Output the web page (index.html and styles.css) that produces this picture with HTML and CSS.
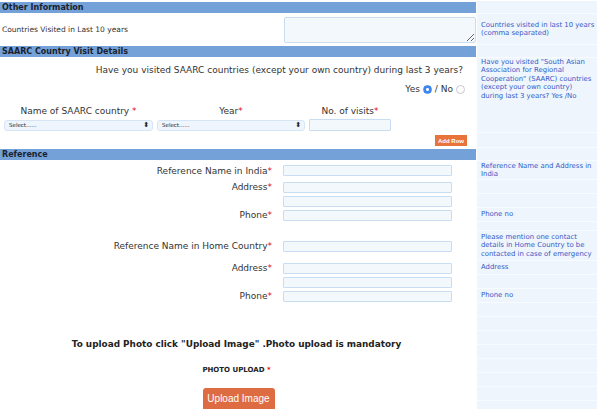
FILE: index.html
```html
<!DOCTYPE html>
<html lang="en">
<head>
<meta charset="UTF-8">
<meta name="viewport" content="width=device-width, initial-scale=1.0">
<title>Other Information</title>
<link rel="stylesheet" href="styles.css">
</head>
<body>

<div class="form">
  <div class="row row-head first">
    <div class="main"><div class="section">Other Information</div></div>
    <div class="help"></div>
  </div>

  <div class="row row-countries">
    <div class="main">
      <span class="small-label">Countries Visited in Last 10 years</span>
      <textarea class="countries"></textarea>
    </div>
    <div class="help">Countries visited in last 10 years (comma separated)</div>
  </div>

  <div class="row row-head">
    <div class="main"><div class="section">SAARC Country Visit Details</div></div>
    <div class="help"></div>
  </div>

  <div class="row row-question">
    <div class="main question">
      <div class="question-text">Have you visited SAARC countries (except your own country) during last 3 years?</div>
      <div class="yesno">
        Yes <span class="radio checked"></span>/ No <span class="radio"></span>
      </div>
    </div>
    <div class="help"><span>Have you visited "South Asian Association for Regional Cooperation" (SAARC) countries (except your own country)<br>during last 3 years? Yes /No</span></div>
  </div>

  <div class="row row-visits">
    <div class="main visits">
      <div class="col-head">Name of SAARC country <span class="req">*</span></div>
      <div class="col-head">Year<span class="req">*</span></div>
      <div class="col-head">No. of visits<span class="req">*</span></div>
      <div class="select"><span>Select......</span><span class="arrows">&#x2B0D;</span></div>
      <div class="select"><span>Select......</span><span class="arrows">&#x2B0D;</span></div>
      <input type="text" class="field">
    </div>
    <div class="help"></div>
  </div>

  <div class="row row-add">
    <div class="main add"><button class="add-row">Add Row</button></div>
    <div class="help"></div>
  </div>

  <div class="row row-head">
    <div class="main"><div class="section">Reference</div></div>
    <div class="help"></div>
  </div>

  <div class="row row-tall">
    <div class="main ref">
      <label>Reference Name in India<span class="req">*</span></label>
      <input type="text" class="field wide">
    </div>
    <div class="help">Reference Name and Address in India</div>
  </div>
  <div class="row row-line">
    <div class="main ref">
      <label>Address<span class="req">*</span></label>
      <input type="text" class="field wide">
    </div>
    <div class="help"></div>
  </div>
  <div class="row row-line">
    <div class="main ref">
      <label></label>
      <input type="text" class="field wide">
    </div>
    <div class="help"></div>
  </div>
  <div class="row row-line">
    <div class="main ref">
      <label>Phone<span class="req">*</span></label>
      <input type="text" class="field wide">
    </div>
    <div class="help">Phone no</div>
  </div>

  <div class="row row-gap">
    <div class="main"></div>
    <div class="help"></div>
  </div>

  <div class="row row-home">
    <div class="main ref">
      <label>Reference Name in Home Country<span class="req">*</span></label>
      <input type="text" class="field wide">
    </div>
    <div class="help">Please mention one contact details in Home Country to be contacted in case of emergency</div>
  </div>
  <div class="row row-line">
    <div class="main ref">
      <label>Address<span class="req">*</span></label>
      <input type="text" class="field wide">
    </div>
    <div class="help">Address</div>
  </div>
  <div class="row row-line">
    <div class="main ref">
      <label></label>
      <input type="text" class="field wide">
    </div>
    <div class="help"></div>
  </div>
  <div class="row row-line">
    <div class="main ref">
      <label>Phone<span class="req">*</span></label>
      <input type="text" class="field wide">
    </div>
    <div class="help">Phone no</div>
  </div>

  <div class="row row-upload">
    <div class="main upload">
      <p class="upload-note">To upload Photo click "Upload Image" .Photo upload is mandatory</p>
      <p class="upload-title">PHOTO UPLOAD <span class="req">*</span></p>
      <button class="upload-btn">Upload Image</button>
    </div>
    <div class="help stripes"></div>
  </div>
</div>

</body>
</html>
```

FILE: styles.css
```css
body {
  margin: 0;
  font-family: "DejaVu Sans", Verdana, sans-serif;
  color: #333;
  background: #fff;
  overflow: hidden;
}
.form {
  width: 597px;
  padding-top: 1px;
}
.row {
  display: grid;
  grid-template-columns: 477px 120px;
}
.main {
  display: flex;
  align-items: center;
}
.help {
  background: #eef5fc;
  border-bottom: 1px solid #f8fbff;
  color: #3559c8;
  font-size: 6.9px;
  line-height: 8.4px;
  padding: 0 0 0 4px;
  display: flex;
  align-items: center;
}
.section {
  width: 476px;
  height: 11px;
  background: #73a1d8;
  color: #1b1f2e;
  font-weight: bold;
  font-size: 8px;
  line-height: 11px;
  padding-left: 2px;
  box-sizing: border-box;
}
.row-head { height: 13px; }
.row-countries { height: 31px; }
.row-question { height: 42px; }
.row-visits { height: 33px; }
.row-add { height: 15px; }
.row-tall { height: 19px; }
.row-line { height: 14px; }
.row-gap { height: 9px; }
.row-home { height: 30px; }
.row-upload { height: 106px; }

.req { color: #e01010; }

.small-label {
  font-size: 7.5px;
  padding-left: 2px;
}
textarea.countries {
  margin-left: auto;
  margin-right: 1px;
  width: 192px;
  height: 26px;
  box-sizing: border-box;
  border: 1px solid #c8ddf2;
  background: #f3f8fd;
  border-radius: 2px;
}

.question {
  flex-direction: column;
  align-items: flex-end;
  justify-content: flex-start;
  font-size: 9px;
  padding-right: 14px;
}
.question-text { margin-top: 7px; }
.yesno {
  margin-top: 9px;
  margin-right: -3px;
  display: flex;
  align-items: center;
  gap: 2px;
}
.radio {
  display: inline-block;
  width: 7px;
  height: 7px;
  border: 1px solid #c8c8c8;
  border-radius: 50%;
  background: #fff;
  margin: 0 1px;
}
.radio.checked {
  border-color: #3c86f0;
  background: radial-gradient(circle, #fff 0 1.3px, #3c86f0 1.6px);
}

.visits {
  display: grid;
  grid-template-columns: 149px 148px 82px;
  column-gap: 4px;
  row-gap: 3px;
  align-content: start;
  padding: 6px 0 0 4px;
  font-size: 9px;
}
.col-head { text-align: center; }
.select {
  height: 11px;
  box-sizing: border-box;
  border: 1px solid #d6e5f5;
  background: #eef5fc;
  border-radius: 3px;
  font-size: 5.5px;
  display: flex;
  align-items: center;
  justify-content: space-between;
  padding: 0 3px 0 4px;
  color: #222;
}
.arrows { font-size: 7px; }
.field {
  height: 12px;
  box-sizing: border-box;
  border: 1px solid #c8ddf2;
  background: #f3f8fd;
  border-radius: 1px;
  padding: 0;
  margin: 0;
}

.add {
  justify-content: flex-end;
  padding-right: 10px;
}
.add-row {
  border: none;
  background: #e8743c;
  color: #fff;
  font-family: "Liberation Sans", Arial, sans-serif;
  font-weight: bold;
  font-size: 6px;
  height: 11px;
  width: 32px;
  padding: 0;
}

.ref label {
  width: 272px;
  text-align: right;
  font-size: 9px;
}
.field.wide {
  width: 169px;
  margin-left: 11px;
  height: 11px;
}

.upload {
  flex-direction: column;
  align-items: center;
  justify-content: flex-start;
  padding-right: 4px;
  box-shadow: 0 40px 30px -30px rgba(0, 0, 0, 0.06);
}
.upload-note {
  margin: 36px 0 0;
  font-weight: bold;
  font-size: 8.9px;
  color: #222;
}
.upload-title {
  margin: 17px 0 0;
  font-weight: bold;
  font-size: 7px;
  color: #222;
}
.upload-btn {
  margin-top: 14px;
  margin-left: 4px;
  width: 72px;
  height: 24px;
  border: none;
  border-radius: 3px;
  background: #dd6c42;
  color: #fff;
  font-family: "Liberation Sans", Arial, sans-serif;
  font-size: 10px;
  padding: 0 0 3px;
}
.stripes {
  background: repeating-linear-gradient(#eef5fc 0 13px, #f7fbff 13px 14px);
}
```
